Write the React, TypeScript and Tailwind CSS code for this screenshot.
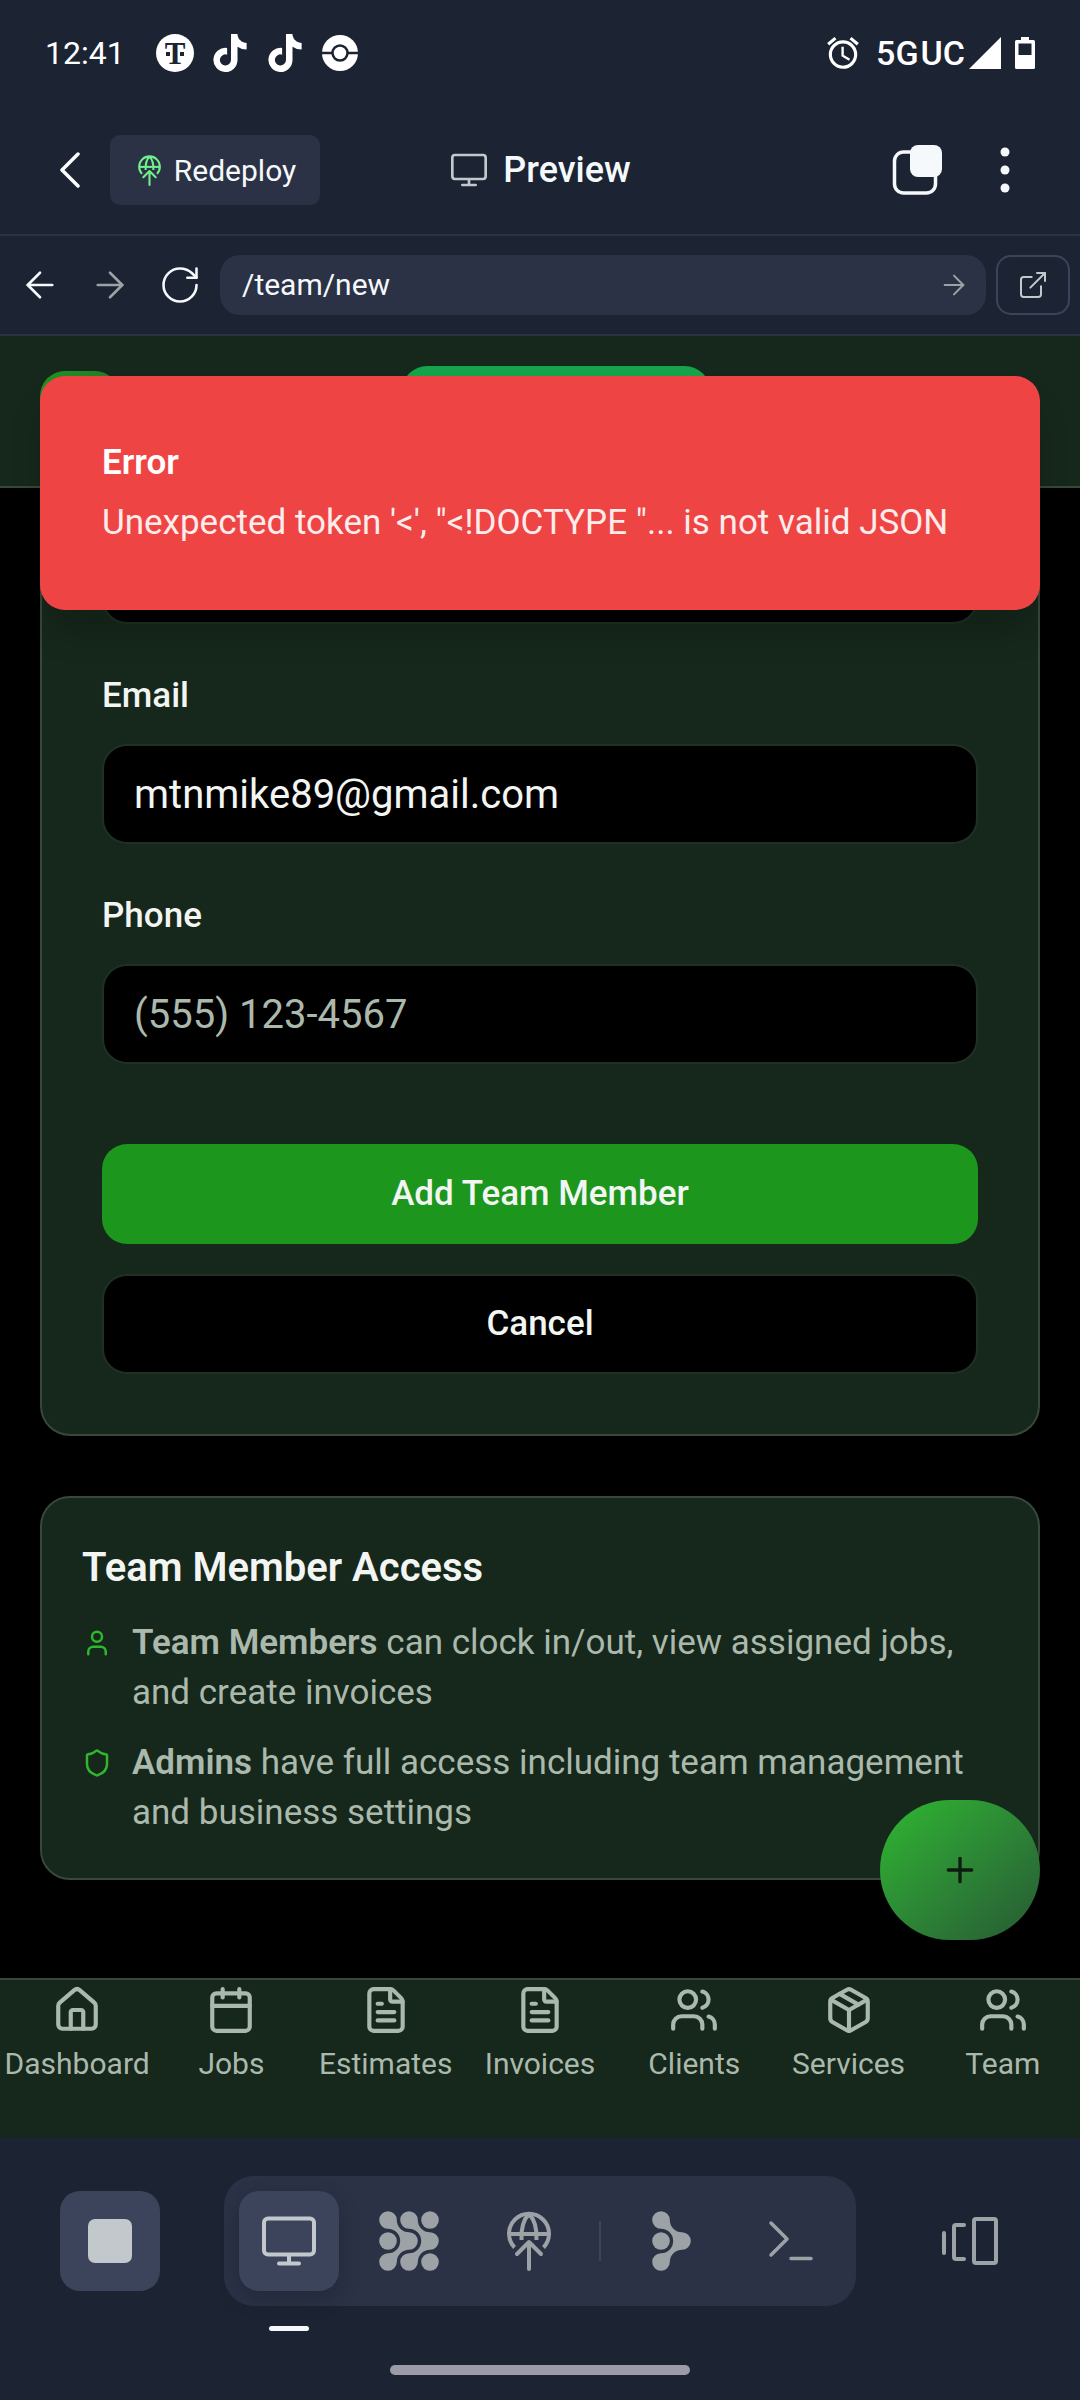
import React from "react";
import {
  ArrowLeft,
  ArrowRight,
  Calendar,
  ExternalLink,
  FileText,
  House,
  Package,
  Plus,
  RotateCw,
  Shield,
  User,
  Users,
} from "lucide-react";
import { FaTiktok } from "react-icons/fa6";
import { MdAlarm } from "react-icons/md";

function MonitorIcon({ className }: { className?: string }) {
  return (
    <svg viewBox="0 0 60 60" className={className} fill="none" stroke="currentColor" strokeWidth="4" strokeLinecap="round">
      <rect x="5" y="7.5" width="50" height="36" rx="4" />
      <path d="M30 44v8M20 52.5h20" />
    </svg>
  );
}

function DeployIcon({ className }: { className?: string }) {
  return (
    <svg viewBox="0 0 60 60" className={className} fill="none" stroke="currentColor" strokeWidth="4" strokeLinecap="round" strokeLinejoin="round">
      <path d="M15.5 36.5a20 20 0 1 1 29 0" strokeLinecap="butt" />
      <path d="M10 23h40" strokeLinecap="butt" />
      <path d="M30 3c-6 6-8 15-7.5 26M30 3c6 6 8 15 7.5 26" strokeLinecap="butt" />
      <path d="M30 31v27M18 43l12-12 12 12" />
    </svg>
  );
}

const BRANCH =
  "M17.8 9A12.2 12.2 0 0 0 30 21.2A8.8 8.8 0 0 1 30 38.8A12.2 12.2 0 0 0 17.8 51A8.8 8.8 0 1 1 9 42.2A12.2 12.2 0 0 0 9 17.8A8.8 8.8 0 1 1 17.8 9Z";

function AgentIcon() {
  return (
    <svg viewBox="0 0 60 60" className="size-[60px]" fill="currentColor">
      <path d={BRANCH} />
      <path d={BRANCH} transform="translate(21 0)" />
      <circle cx="9" cy="30" r="8.8" />
      <circle cx="51" cy="9" r="8.8" />
      <circle cx="51" cy="51" r="8.8" />
    </svg>
  );
}

function BranchIcon() {
  return (
    <svg viewBox="0 0 39 60" className="h-[60px] w-[39px]" fill="currentColor">
      <path d={BRANCH} />
      <circle cx="9" cy="30" r="8.8" />
    </svg>
  );
}

function StatusBar() {
  return (
    <div className="flex h-[106px] items-center justify-between px-[45px] text-white">
      <div className="flex items-center">
        <span className="w-[111px] text-[32px] leading-[40px]">12:41</span>
        <svg viewBox="0 0 38 38" className="size-[38px]" fill="#1c2333">
          <circle cx="19" cy="19" r="19" fill="#fff" />
          <text x="19" y="29.500" textAnchor="middle" fontFamily="Liberation Serif, serif" fontWeight="700" fontSize="31">T</text>
          <rect x="10" y="18" width="4" height="4" />
          <rect x="24" y="18" width="4" height="4" />
        </svg>
        <FaTiktok className="ml-[17px] h-[38px] w-[38px]" />
        <FaTiktok className="ml-[17px] h-[38px] w-[38px]" />
        <svg viewBox="0 0 36 36" className="ml-[18px] size-9">
          <circle cx="18" cy="18" r="18" fill="#fff" />
          <path d="M0 18h36" stroke="#1c2333" strokeWidth="2.500" />
          <circle cx="18" cy="18" r="7.500" fill="#fff" stroke="#1c2333" strokeWidth="2.500" />
        </svg>
      </div>
      <div className="flex items-center">
        <MdAlarm className="size-[38px]" />
        <span className="ml-[14px] text-[34px] font-medium leading-[40px]">5G</span>
        <span className="ml-[2px] text-[34px] font-medium leading-[40px]">UC</span>
        <svg viewBox="0 0 32 32" className="ml-1 size-8" fill="currentColor">
          <path d="M32 0v32H0z" />
        </svg>
        <svg viewBox="0 0 20 32" className="ml-[14px] h-8 w-5" fill="currentColor">
          <path fillRule="evenodd" d="M6 0h8v3h4.500q1.500 0 1.500 1.500v26q0 1.500-1.500 1.500h-17q-1.500 0-1.500-1.500v-26q0-1.500 1.500-1.500h4.500zM3.500 6.500v11.500h13v-11.500z" />
        </svg>
      </div>
    </div>
  );
}

function TitleBar() {
  return (
    <header className="grid h-[130px] grid-cols-[1fr_auto_1fr] items-center border-b-2 border-[#2b3245]">
      <div className="flex items-center pl-[30px]">
        <button aria-label="Back" className="flex h-[70px] w-20 items-center justify-center text-white">
          <svg viewBox="0 0 22 36" className="h-9 w-[22px]" fill="none" stroke="currentColor" strokeWidth="3.500" strokeLinecap="round" strokeLinejoin="round">
            <path d="M19 2L3 18l16 16" />
          </svg>
        </button>
        <button className="flex h-[70px] w-[210px] items-center justify-center gap-[9px] rounded-[10px] bg-[#2b3245] text-[30px] text-[#f5f9fc]">
          <DeployIcon className="size-[31px] text-[#72f08b]" />
          Redeploy
        </button>
      </div>
      <h1 className="flex items-center gap-[14px] text-[36px] font-medium leading-[48px] text-[#f5f9fc]">
        <MonitorIcon className="size-10 text-[#c2c8cc]" />
        Preview
      </h1>
      <div className="flex items-center justify-end pr-[31px] text-[#f5f9fc]">
        <button aria-label="Tabs" className="flex h-[70px] w-[88px] items-center justify-center">
          <svg viewBox="0 0 50 50" className="size-[50px]">
            <rect x="2.500" y="7" width="41" height="41" rx="9" fill="none" stroke="currentColor" strokeWidth="3.500" />
            <rect x="18" y="0" width="32" height="32" rx="8" fill="currentColor" />
          </svg>
        </button>
        <button aria-label="More options" className="flex h-[70px] w-[88px] items-center justify-center">
          <svg viewBox="0 0 10 46" className="h-[46px] w-[10px]" fill="currentColor">
            <circle cx="5" cy="5" r="4.500" />
            <circle cx="5" cy="23" r="4.500" />
            <circle cx="5" cy="41" r="4.500" />
          </svg>
        </button>
      </div>
    </header>
  );
}

function AddressBar() {
  return (
    <div className="flex h-[100px] items-center border-b-2 border-[#2b3245] pl-[5px] pr-[10px] text-[#f5f9fc]">
      <button aria-label="Go back" className="flex h-[60px] w-[70px] items-center justify-center">
        <ArrowLeft size={42} strokeWidth={1.5} />
      </button>
      <button aria-label="Go forward" className="flex h-[60px] w-[70px] items-center justify-center text-[#9da2a6]">
        <ArrowRight size={42} strokeWidth={1.5} />
      </button>
      <button aria-label="Reload" className="flex h-[60px] w-[70px] items-center justify-center">
        <RotateCw size={44} strokeWidth={1.4} />
      </button>
      <div className="ml-[5px] flex h-[60px] flex-1 items-center rounded-[20px] bg-[#2b3245] pl-[22px] pr-4">
        <input aria-label="Address" defaultValue="/team/new" className="min-w-0 flex-1 bg-transparent text-[30px] leading-[40px] outline-none" />
        <button aria-label="Go" className="text-[#9da2a6]">
          <ArrowRight size={32} strokeWidth={1.5} />
        </button>
      </div>
      <button aria-label="Open in new tab" className="ml-[10px] flex h-[60px] w-[74px] items-center justify-center rounded-[15px] border-2 border-[#3c445c] text-[#c2c8cc]">
        <ExternalLink size={32} strokeWidth={1.5} />
      </button>
    </div>
  );
}

const fieldClass =
  "h-[100px] w-full rounded-[25px] border-2 border-[#1f3024] bg-black px-[30px] text-[40px] text-[#f2f5f2] outline-none placeholder:text-[#abb9ad]";

function MemberForm() {
  return (
    <form className="rounded-b-[30px] border-2 border-t-0 border-[#37473a] bg-[#16271b] px-[60px] pb-[60px] pt-9">
      <input aria-label="Name" type="text" className={fieldClass} />
      <div className="mt-[47px] flex flex-col gap-[23px]">
        <label htmlFor="email" className="text-[35px] font-medium leading-[50px] text-[#f2f5f2]">Email</label>
        <input id="email" type="email" defaultValue="mtnmike89@gmail.com" className={fieldClass} />
      </div>
      <div className="mt-[47px] flex flex-col gap-[23px]">
        <label htmlFor="phone" className="text-[35px] font-medium leading-[50px] text-[#f2f5f2]">Phone</label>
        <input id="phone" type="tel" placeholder="(555) 123-4567" className={fieldClass} />
      </div>
      <div className="mt-20 flex flex-col gap-[30px] text-[35px] font-medium text-[#f2f5f2]">
        <button type="button" className="h-[100px] rounded-[25px] bg-[#1c961c]">Add Team Member</button>
        <button type="button" className="h-[100px] rounded-[25px] border-2 border-[#1f3024] bg-black">Cancel</button>
      </div>
    </form>
  );
}

function AccessCard() {
  return (
    <section className="mt-[60px] rounded-[30px] border-2 border-[#37473a] bg-[#16271b] p-10">
      <h2 className="text-[40px] font-semibold leading-[60px] text-[#f2f5f2]">Team Member Access</h2>
      <ul className="mt-5 flex flex-col gap-5 text-[35px] leading-[50px] text-[#abb9ad]">
        <li className="flex gap-5">
          <User size={30} className="mt-[10px] shrink-0 text-[#2eb82e]" />
          <p><strong className="font-semibold">Team Members</strong> can clock in/out, view assigned jobs, and create invoices</p>
        </li>
        <li className="flex gap-5">
          <Shield size={30} className="mt-[10px] shrink-0 text-[#2eb82e]" />
          <p><strong className="font-semibold">Admins</strong> have full access including team management and business settings</p>
        </li>
      </ul>
    </section>
  );
}

const navItems = [
  { label: "Dashboard", Icon: House },
  { label: "Jobs", Icon: Calendar },
  { label: "Estimates", Icon: FileText },
  { label: "Invoices", Icon: FileText },
  { label: "Clients", Icon: Users },
  { label: "Services", Icon: Package },
  { label: "Team", Icon: Users },
];

function TabNav() {
  return (
    <nav className="grid h-40 grid-cols-7 border-t-2 border-[#37473a] bg-[#16271b] pt-[5px] text-[#abb9ad]">
      {navItems.map(({ label, Icon }) => (
        <a key={label} href="#" className="flex flex-col items-center gap-[9px] text-[30px] leading-[40px]">
          <Icon size={50} />
          {label}
        </a>
      ))}
    </nav>
  );
}

const toolClass = "flex size-[100px] items-center justify-center rounded-[20px]";

function WorkspaceBar() {
  return (
    <footer className="flex h-[262px] flex-col items-center justify-between pb-[25px] pt-[38px] text-[#9da2a6]">
      <div className="flex w-full items-center justify-between px-[60px]">
        <button aria-label="Stop" className={`${toolClass} bg-[#3c445c]`}>
          <span className="size-11 rounded-[7px] bg-[#c2c8cc]" />
        </button>
        <div className="flex h-[130px] items-center gap-5 rounded-[30px] bg-[#2b3245] px-[15px]">
          <button aria-label="Preview" className={`${toolClass} relative bg-[#3c445c] text-[#c2c8cc] shadow-[0_8px_20px_rgba(20,20,40,0.3)]`}>
            <MonitorIcon className="size-[60px]" />
            <span className="absolute -bottom-10 left-[30px] h-[5px] w-10 rounded-full bg-[#f5f9fc]" />
          </button>
          <button aria-label="Agent" className={toolClass}><AgentIcon /></button>
          <button aria-label="Deployments" className={toolClass}><DeployIcon className="size-[60px]" /></button>
          <div className="h-10 w-[2px] bg-[#3c445c]" />
          <button aria-label="Workflows" className={toolClass}><BranchIcon /></button>
          <button aria-label="Shell" className={toolClass}>
            <svg viewBox="0 0 60 60" className="size-[60px]" fill="none" stroke="currentColor" strokeWidth="3.500" strokeLinecap="round" strokeLinejoin="round">
              <path d="M10 12l16 16-16 16M30 47.500h20" />
            </svg>
          </button>
        </div>
        <button aria-label="All panels" className={toolClass}>
          <svg viewBox="0 0 60 60" className="size-[60px]" fill="none" stroke="currentColor" strokeWidth="4" strokeLinecap="round" strokeLinejoin="round">
            <path d="M4 22v20M24 14h-8a2 2 0 0 0-2 2v30a2 2 0 0 0 2 2h8" />
            <rect x="34" y="8" width="22" height="44" rx="2" />
          </svg>
        </button>
      </div>
      <div className="h-[10px] w-[300px] rounded-full bg-[#9a9ba6]" />
    </footer>
  );
}

export default function App() {
  return (
    <div className="flex min-h-screen flex-col bg-[#1c2333] font-['Roboto',sans-serif]">
      <StatusBar />
      <TitleBar />
      <AddressBar />
      <div className="relative flex flex-1 flex-col bg-black">
        <header className="flex h-[152px] items-center justify-between border-b-2 border-[#37473a] bg-[#16271b] px-10">
          <div className="size-20 rounded-[25px] bg-linear-to-br from-[#1c961c] to-[#276030]" />
          <div className="h-[90px] w-[308px] rounded-[25px] bg-[#16a34a]" />
          <div className="w-12" />
        </header>
        <main className="flex-1 px-10 pb-[98px]">
          <MemberForm />
          <AccessCard />
        </main>
        <div role="alert" className="absolute inset-x-10 top-10 flex flex-col gap-[10px] rounded-[25px] bg-[#ef4444] p-[62px] text-[35px] leading-[50px] text-white shadow-[0_25px_38px_-8px_rgba(0,0,0,0.2)]">
          <strong className="font-semibold">Error</strong>
          <p className="opacity-90">{"Unexpected token '<', \"<!DOCTYPE \"... is not valid JSON"}</p>
        </div>
        <button aria-label="Add" className="absolute bottom-[198px] right-10 flex h-[140px] w-40 items-center justify-center rounded-full bg-linear-to-br from-[#2eb82e] to-[#265933] text-[#0f1a10]">
          <Plus size={40} />
        </button>
        <TabNav />
      </div>
      <WorkspaceBar />
    </div>
  );
}
